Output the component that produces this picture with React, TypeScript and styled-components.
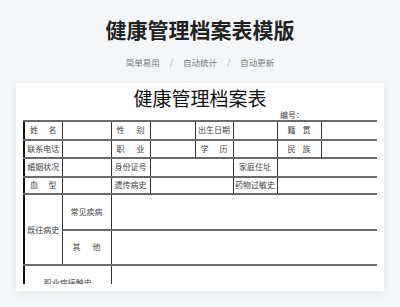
import React, { FC } from 'react'
import styled, { createGlobalStyle } from 'styled-components'

const GlobalStyle = createGlobalStyle`
  html, body {
    margin: 0;
    padding: 0;
    background: #f5f6f8;
  }
  body {
    font-family: "Noto Sans CJK SC", "Noto Sans", sans-serif;
  }
`

const Page = styled.div`
  width: 400px;
  height: 307px;
  overflow: hidden;
  background: #f5f6f8;
  display: flex;
  flex-direction: column;
  align-items: center;
`

const Heading = styled.h1`
  margin: 16px 0 0;
  font-size: 21px;
  line-height: 26px;
  font-weight: 700;
  color: #222;
`

const Tags = styled.div`
  margin-top: 14px;
  display: flex;
  align-items: center;
  gap: 10px;
  font-size: 8.5px;
  line-height: 12px;
  color: #777;
`

const Slash = styled.span`
  color: #999;
`

const Card = styled.section`
  margin-top: 15px;
  width: 368px;
  box-sizing: border-box;
  padding: 0 7px 7px;
  background: #fff;
  box-shadow: 0 2px 8px rgba(0, 0, 0, 0.07);
`

const Sheet = styled.div`
  height: 201px;
  overflow: hidden;
`

const SheetTitle = styled.h2`
  margin: 3px 0 0;
  text-align: center;
  font-size: 19px;
  line-height: 24px;
  font-weight: 400;
  color: #111;
`

const SerialNo = styled.div`
  padding-left: 257px;
  font-size: 8px;
  line-height: 10px;
  color: #444;
`

const Table = styled.table`
  width: 354px;
  table-layout: fixed;
  border-collapse: collapse;
  border: 2px solid #111;
`

const Row = styled.tr<{ $h: number }>`
  height: ${p => p.$h}px;
`

const Cell = styled.td<{ $spread?: boolean; $pad?: number }>`
  border-left: 1px solid #333;
  border-right: 1px solid #333;
  border-top: 2px solid #6a6a6a;
  border-bottom: 2px solid #6a6a6a;
  padding: 0 ${p => (p.$pad ?? 2)}px;
  font-size: 8px;
  line-height: 10px;
  color: #444;
  white-space: nowrap;
  overflow: hidden;
  text-align: ${p => (p.$spread ? 'justify' : 'center')};
  text-align-last: ${p => (p.$spread ? 'justify' : 'center')};
  vertical-align: middle;
`

const widths = [38, 49, 39, 45, 38, 44, 44, 57]

const Label: FC<{ text: string; pad?: number; colSpan?: number; rowSpan?: number }> = ({ text, pad, colSpan, rowSpan }) => (
  <Cell $spread={text.length === 2} $pad={pad ?? (text.length === 2 ? 5 : 1)} colSpan={colSpan} rowSpan={rowSpan}>
    {text}
  </Cell>
)

const App: FC = () => {
  return (
    <>
      <GlobalStyle />
      <Page>
        <Heading>健康管理档案表模版</Heading>
        <Tags>
          <span>简单易用</span>
          <Slash>/</Slash>
          <span>自动统计</span>
          <Slash>/</Slash>
          <span>自动更新</span>
        </Tags>
        <Card>
          <Sheet>
            <SheetTitle>健康管理档案表</SheetTitle>
            <SerialNo>编号：</SerialNo>
            <Table>
              <colgroup>
                {widths.map((w, i) => <col key={i} style={{ width: w }} />)}
              </colgroup>
              <tbody>
                <Row $h={18.5}>
                  <Label text="姓名" />
                  <Cell />
                  <Label text="性别" />
                  <Cell />
                  <Label text="出生日期" />
                  <Cell />
                  <Label text="籍贯" pad={10} />
                  <Cell />
                </Row>
                <Row $h={18.5}>
                  <Label text="联系电话" />
                  <Cell />
                  <Label text="职业" />
                  <Cell />
                  <Label text="学历" />
                  <Cell />
                  <Label text="民族" pad={10} />
                  <Cell />
                </Row>
                <Row $h={18.5}>
                  <Label text="婚姻状况" />
                  <Cell />
                  <Label text="身份证号" />
                  <Cell colSpan={2} />
                  <Label text="家庭住址" />
                  <Cell colSpan={2} />
                </Row>
                <Row $h={17.5}>
                  <Label text="血型" />
                  <Cell />
                  <Label text="遗传病史" />
                  <Cell colSpan={2} />
                  <Label text="药物过敏史" pad={0} />
                  <Cell colSpan={2} />
                </Row>
                <Row $h={35.5}>
                  <Label text="既往病史" rowSpan={2} />
                  <Label text="常见疾病" />
                  <Cell colSpan={6} />
                </Row>
                <Row $h={35.5}>
                  <Label text="其他" pad={10} />
                  <Cell colSpan={6} />
                </Row>
                <Row $h={36}>
                  <Label text="职业病接触史" colSpan={2} />
                  <Cell colSpan={6} />
                </Row>
              </tbody>
            </Table>
          </Sheet>
        </Card>
      </Page>
    </>
  )
}

export default App
